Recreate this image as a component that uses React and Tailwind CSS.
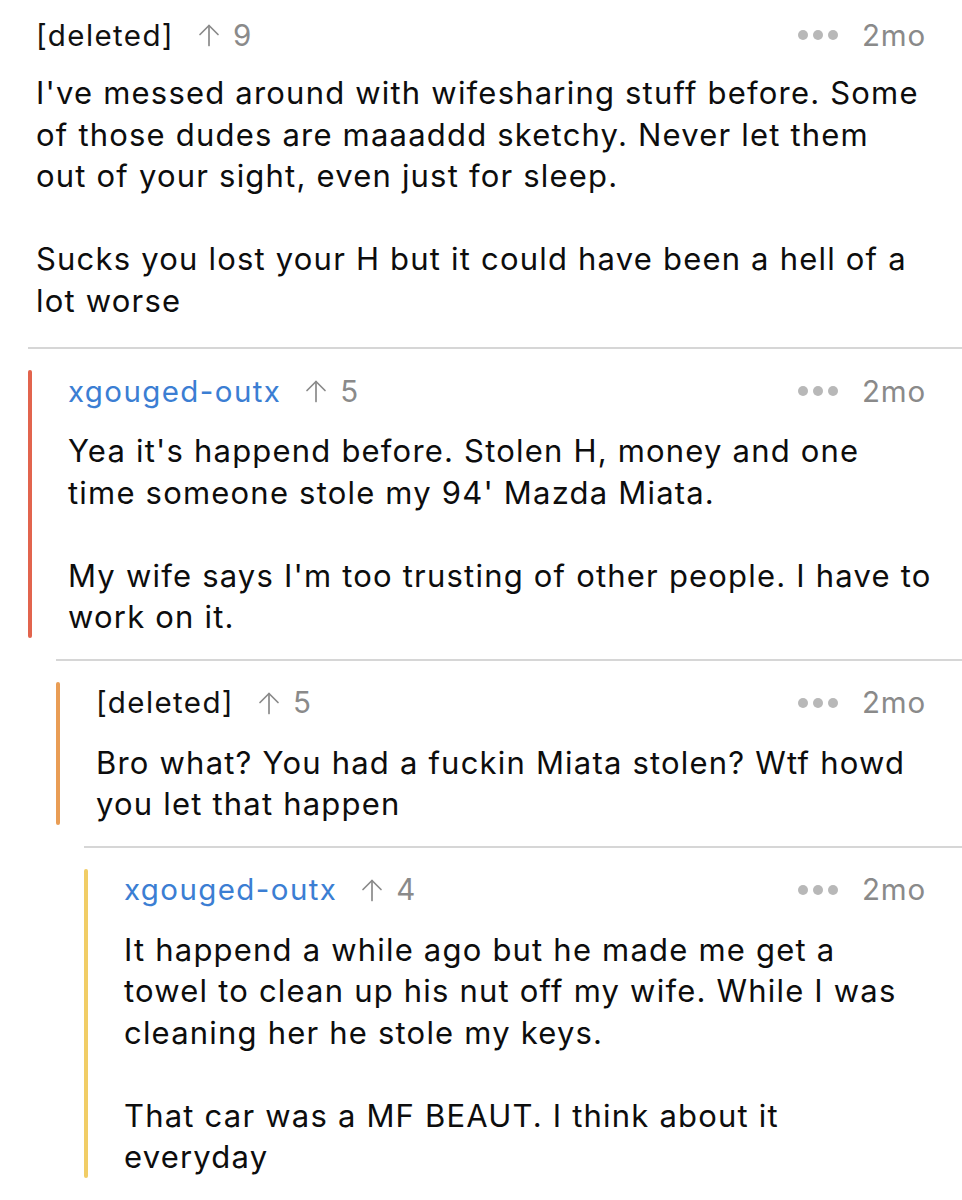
import React from 'react';

// line breaks follow the screenshot exactly
const comments = [
  {
    depth: 0,
    author: '[deleted]',
    deleted: true,
    score: 9,
    body: "I've messed around with wifesharing stuff before. Some\nof those dudes are maaaddd sketchy. Never let them\nout of your sight, even just for sleep.\n\nSucks you lost your H but it could have been a hell of a\nlot worse",
  },
  {
    depth: 1,
    author: 'xgouged-outx',
    score: 5,
    bar: 'bg-[#e2644d]',
    body: "Yea it's happend before. Stolen H, money and one\ntime someone stole my 94' Mazda Miata.\n\nMy wife says I'm too trusting of other people. I have to\nwork on it.",
  },
  {
    depth: 2,
    author: '[deleted]',
    deleted: true,
    score: 5,
    bar: 'bg-[#e99d55]',
    body: 'Bro what? You had a fuckin Miata stolen? Wtf howd\nyou let that happen',
  },
  {
    depth: 3,
    author: 'xgouged-outx',
    score: 4,
    bar: 'bg-[#f1cd66]',
    body: 'It happend a while ago but he made me get a\ntowel to clean up his nut off my wife. While I was\ncleaning her he stole my keys.\n\nThat car was a MF BEAUT. I think about it\neveryday',
  },
];

const indents = ['ml-0', 'ml-[28px]', 'ml-[56px]', 'ml-[84px]'];

function UpArrow() {
  return (
    <svg width="22" height="24" viewBox="0 0 22 24" fill="none" stroke="#8a8a8a" strokeWidth="1.7" strokeLinecap="round" strokeLinejoin="round">
      <path d="M11 22.5V2.5" />
      <path d="M2 11.5l9-9 9 9" />
    </svg>
  );
}

function Header({ c }) {
  return (
    <div className="flex items-center h-[42px] pr-[36px]">
      <span className={`text-[29.5px] tracking-[1.4px] ${c.deleted ? 'text-[#111]' : 'text-[#3b7ed3]'}`}>{c.author}</span>
      <span className="ml-[24px] flex items-center gap-[13px] text-[29.5px] text-[#8a8a8a]">
        <UpArrow />
        {c.score}
      </span>
      <div className="ml-auto flex items-center gap-[5px]">
        <span className="w-[10px] h-[10px] rounded-full bg-[#b8b8b8]" />
        <span className="w-[10px] h-[10px] rounded-full bg-[#b8b8b8]" />
        <span className="w-[10px] h-[10px] rounded-full bg-[#b8b8b8]" />
      </div>
      <span className="ml-[24px] text-[29.5px] tracking-[0.8px] text-[#8a8a8a]">2mo</span>
    </div>
  );
}

function Body({ text, mt }) {
  return (
    <p className={`${mt} text-[31px] tracking-[1.2px] leading-[41.5px] text-[#0d0d0d] whitespace-pre`}>{text}</p>
  );
}

function Comment({ c }) {
  if (c.depth === 0) {
    return (
      <div className="pl-[36px] pt-[14px] pb-[26px]">
        <Header c={c} />
        <Body text={c.body} mt="mt-[16px]" />
      </div>
    );
  }
  return (
    <div className={`${indents[c.depth]} border-t-2 border-[#d6d6d6]`}>
      <div className="flex py-[21px]">
        <div className={`w-[4px] rounded-full shrink-0 ${c.bar}`} />
        <div className="pl-[36px] flex-1 min-w-0">
          <Header c={c} />
          <Body text={c.body} mt="mt-[18px]" />
        </div>
      </div>
    </div>
  );
}

export default function App() {
  return (
    <div className="w-[962px] h-[1200px] bg-white overflow-hidden" style={{ fontFamily: 'Inter, "Noto Sans", sans-serif' }}>
      {comments.map((c, i) => (
        <Comment key={i} c={c} />
      ))}
    </div>
  );
}
